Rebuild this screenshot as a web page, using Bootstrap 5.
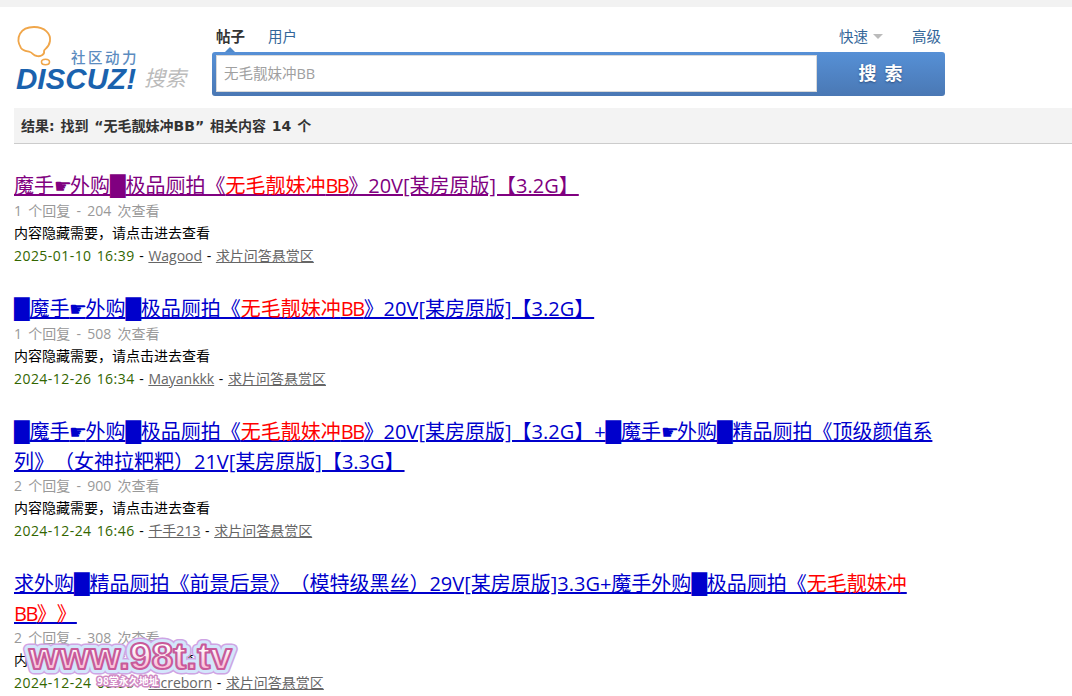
<!DOCTYPE html>
<html lang="zh"><head>
<meta charset="utf-8">
<title>搜索</title>
<link rel="stylesheet" href="https://cdn.jsdelivr.net/npm/bootstrap@5.3.0/dist/css/bootstrap.min.css">
<style>
  html, body { overflow: hidden; height: 696px; }
  body { font-family: "Open Sans", "Noto Sans CJK SC", sans-serif; font-size: 14px; color: #000; background: #fff; border-top: 7px solid #f2f2f2; text-spacing-trim: space-all; }
  .page-wrap { padding: 0 0 0 14px; }
  .head-row { height: 101px; }
  .logo-box { width: 198px; height: 101px; flex: none; }
  .logo-box svg { display: block; }
  .search-col { width: 733px; padding-top: 18px; }
  .tab-row { height: 27px; font-size: 14.5px; line-height: 24px; }
  .tab-on { color: #333; font-weight: 700; margin: 0 23px 0 4px; position: relative; height: 24px; }
  .tab-on::after { content: ""; position: absolute; left: 9px; bottom: -3px; border: 5px solid transparent; border-top: 0; border-bottom-color: #5089c9; }
  .tab-off, .tab-off:hover { color: #369; text-decoration: none; }
  .tab-adv { margin-left: 29px; margin-right: 4px; }
  .quick-caret { display: inline-block; border: 5px solid transparent; border-top-color: #bbb; border-bottom: 0; margin: 0 0 3px 5px; }
  .search-bar { height: 44px; border-radius: 3px; background: linear-gradient(#5690d6, #4a78b4); }
  .search-input { width: 601px; height: 37px; margin: 3px 0 0 4px; border: 1px solid #d9d9d9; background: #fff; color: #a0a0a0; font-size: 14.5px; line-height: 36px; padding-left: 7px; }
  .search-btn { flex: 1; color: #fff; font-weight: 700; font-size: 18px; letter-spacing: 8px; text-align: center; line-height: 42px; padding-left: 7px; text-shadow: 0 1px 2px #2d4f80; }
  .result-bar { height: 36px; background: #f3f3f3; border-bottom: 1px solid #ccc; font-family: "DejaVu Sans", "Noto Sans CJK SC", sans-serif; font-weight: 700; font-size: 14px; word-spacing: 1px; line-height: 36px; color: #333; padding-left: 7px; }
  .result-list { margin-top: 27px; width: 925px; }
  .result-item { margin-bottom: 27px; }
  .result-title { font-size: 20px; line-height: 29px; font-weight: 400; margin: 0 0 -1.5px; }
  .result-title a { color: #00c; text-decoration: underline; }
  .result-title a.seen { color: purple; }
  .hl { color: #f00; }
  .blk { font-family: "DejaVu Sans", sans-serif; }
  .hand { letter-spacing: -2px; }
  .lat-tight { letter-spacing: -1.5px; }
  .line-meta { line-height: 22.5px; }
  .txt-grey { color: #999; word-spacing: 2.6px; }
  .txt-date { color: #360; letter-spacing: .45px; }
  .txt-sep { word-spacing: 1px; }
  .line-meta a { color: #666; text-decoration: underline; }
  .stamp { position: absolute; left: 18px; top: 626px; }
</style>
</head>
<body>
<div class="page-wrap">
  <div class="head-row d-flex">
    <div class="logo-box">
      <svg width="185" height="90" viewBox="0 0 185 90">
        <path d="M7 41C1 31 6 20 20 20C31 20 37 27 36 34C35 41 30 42 30 44C31 47 27 50 23 49C19 49 19 46 16 45C12 44 9 44 7 41Z" fill="none" stroke="#f0a64a" stroke-width="1.8"/>
        <ellipse cx="31.500" cy="55" rx="4" ry="2.700" fill="none" stroke="#f0a64a" stroke-width="1.600"/>
        <text x="57" y="56" font-family="Noto Sans CJK SC" font-size="14.500" font-weight="500" letter-spacing="2.500" fill="#5c8cc0">社区动力</text>
        <text x="2" y="82" font-family="Liberation Sans" font-size="29" font-weight="700" font-style="italic" textLength="120" lengthAdjust="spacingAndGlyphs" fill="#1a62ae">DISCUZ!</text>
        <text x="130" y="79" font-family="Noto Sans CJK SC" font-size="21" font-style="italic" fill="#bbb">搜索</text>
      </svg>
    </div>
    <div class="search-col">
      <div class="tab-row d-flex">
        <span class="tab-on">帖子</span>
        <a href="#" class="tab-off">用户</a>
        <a href="#" class="tab-off ms-auto">快速<span class="quick-caret"></span></a>
        <a href="#" class="tab-off tab-adv">高级</a>
      </div>
      <div class="search-bar d-flex">
        <div class="search-input">无毛靓妹冲BB</div>
        <div class="search-btn">搜索</div>
      </div>
    </div>
  </div>
  <div class="result-bar">结果: 找到 “无毛靓妹冲BB” 相关内容 14 个</div>
  <div class="result-list">
    <div class="result-item">
      <h3 class="result-title"><a class="seen" href="#">魔手<span class="hand">☛</span>外购<span class="blk">█</span>极品厕拍《<span class="hl">无毛靓妹冲<span class="lat-tight">BB</span></span>》20V[某房原版]【3.2G】</a></h3>
      <div class="line-meta txt-grey">1 个回复 - 204 次查看</div>
      <div class="line-meta">内容隐藏需要，请点击进去查看</div>
      <div class="line-meta txt-sep"><span class="txt-date">2025-01-10 16:39</span> - <a href="#">Wagood</a> - <a href="#">求片问答悬赏区</a></div>
    </div>
    <div class="result-item">
      <h3 class="result-title"><a href="#"><span class="blk">█</span>魔手<span class="hand">☛</span>外购<span class="blk">█</span>极品厕拍《<span class="hl">无毛靓妹冲<span class="lat-tight">BB</span></span>》20V[某房原版]【3.2G】</a></h3>
      <div class="line-meta txt-grey">1 个回复 - 508 次查看</div>
      <div class="line-meta">内容隐藏需要，请点击进去查看</div>
      <div class="line-meta txt-sep"><span class="txt-date">2024-12-26 16:34</span> - <a href="#">Mayankkk</a> - <a href="#">求片问答悬赏区</a></div>
    </div>
    <div class="result-item">
      <h3 class="result-title"><a href="#"><span class="blk">█</span>魔手<span class="hand">☛</span>外购<span class="blk">█</span>极品厕拍《<span class="hl">无毛靓妹冲<span class="lat-tight">BB</span></span>》20V[某房原版]【3.2G】+<span class="blk">█</span>魔手<span class="hand">☛</span>外购<span class="blk">█</span>精品厕拍《顶级颜值系列》（女神拉粑粑）21V[某房原版]【3.3G】</a></h3>
      <div class="line-meta txt-grey">2 个回复 - 900 次查看</div>
      <div class="line-meta">内容隐藏需要，请点击进去查看</div>
      <div class="line-meta txt-sep"><span class="txt-date">2024-12-24 16:46</span> - <a href="#">千手213</a> - <a href="#">求片问答悬赏区</a></div>
    </div>
    <div class="result-item">
      <h3 class="result-title"><a href="#">求外购<span class="blk">█</span>精品厕拍《前景后景》（模特级黑丝）29V[某房原版]3.3G+魔手外购<span class="blk">█</span>极品厕拍《<span class="hl">无毛靓妹冲<span class="lat-tight">BB</span>》》</span></a></h3>
      <div class="line-meta txt-grey">2 个回复 - 308 次查看</div>
      <div class="line-meta">内容隐藏需要，请点击进去查看</div>
      <div class="line-meta txt-sep"><span class="txt-date">2024-12-24 08:55</span> - <a href="#">lucreborn</a> - <a href="#">求片问答悬赏区</a></div>
    </div>
  </div>
</div>
<svg class="stamp" width="228" height="66" viewBox="0 0 228 66">
  <defs><linearGradient id="pinkFill" x1="0" y1="0" x2="0" y2="1"><stop offset=".25" stop-color="#fff"/><stop offset="1" stop-color="#f9a0c6"/></linearGradient></defs>
  <g font-family="Liberation Sans" font-weight="700" font-size="36" stroke-linejoin="round">
    <text x="11" y="43" textLength="203" lengthAdjust="spacingAndGlyphs" fill="none" stroke="#cfa4e4" stroke-width="11">www.98t.tv</text>
    <text x="11" y="43" textLength="203" lengthAdjust="spacingAndGlyphs" fill="none" stroke="#d3e6fb" stroke-width="8">www.98t.tv</text>
    <text x="11" y="43" textLength="203" lengthAdjust="spacingAndGlyphs" fill="url(#pinkFill)" stroke="#c85a9a" stroke-width="2">www.98t.tv</text>
  </g>
  <text x="79" y="59" font-family="Noto Sans CJK SC" font-size="10" font-weight="700" fill="#fff" stroke="#d08ac4" stroke-width="3" paint-order="stroke" stroke-linejoin="round">98堂永久地址</text>
</svg>
</body></html>
